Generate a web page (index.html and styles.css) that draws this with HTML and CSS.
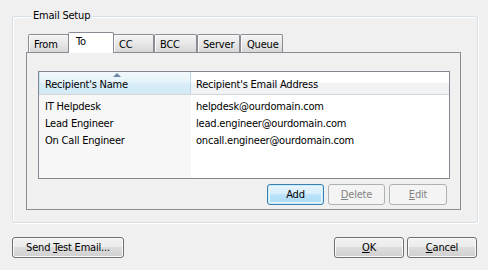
FILE: index.html
```html
<!DOCTYPE html>
<html>
<head>
<meta charset="utf-8">
<link rel="stylesheet" href="styles.css">
</head>
<body>
<div class="dialog">
  <div class="group">
    <div class="group-title">Email Setup</div>
    <div class="tabs">
      <div class="tab t-from">From</div>
      <div class="tab t-to selected">To</div>
      <div class="tab t-cc">CC</div>
      <div class="tab t-bcc">BCC</div>
      <div class="tab t-server">Server</div>
      <div class="tab t-queue">Queue</div>
    </div>
    <div class="panel">
      <div class="listview">
        <div class="lv-header">
          <div class="lv-col c1 sorted"><span class="sort-arrow"></span>Recipient's Name</div>
          <div class="lv-col c2">Recipient's Email Address</div>
          <div class="lv-col c3"></div>
        </div>
        <div class="lv-body">
          <div class="lv-sortbg"></div>
          <div class="lv-rows">
            <div class="lv-row"><span class="cell c1">IT Helpdesk</span><span class="cell c2">helpdesk@ourdomain.com</span></div>
            <div class="lv-row"><span class="cell c1">Lead Engineer</span><span class="cell c2">lead.engineer@ourdomain.com</span></div>
            <div class="lv-row"><span class="cell c1">On Call Engineer</span><span class="cell c2">oncall.engineer@ourdomain.com</span></div>
          </div>
        </div>
      </div>
      <div class="panel-buttons">
        <div class="btn default b-add">Add</div>
        <div class="btn disabled b-del"><u>D</u>elete</div>
        <div class="btn disabled b-edit"><u>E</u>dit</div>
      </div>
    </div>
  </div>
  <div class="footer">
    <div class="btn b-send">Send <u>T</u>est Email...</div>
    <div class="spacer"></div>
    <div class="btn b-ok"><u>O</u>K</div>
    <div class="btn b-cancel"><u>C</u>ancel</div>
  </div>
</div>
</body>
</html>
```
FILE: styles.css
```css
* { box-sizing: border-box; }
html, body { margin: 0; padding: 0; }
body {
  width: 488px;
  height: 270px;
  background: #f0f0f0;
  font-family: "DejaVu Sans Condensed", "DejaVu Sans", sans-serif;
  font-size: 11px;
  letter-spacing: -0.2px;
  color: #000;
  overflow: hidden;
}
.dialog {
  padding: 16px 0 0 12px;
}
.group {
  width: 466px;
  height: 207px;
  border: 1px solid #d5dfe5;
  border-radius: 3px;
  box-shadow: 1px 1px 0 #fff, inset 1px 1px 0 #fff;
  padding: 0 16px 0 13px;
}
.group-title {
  display: inline-block;
  margin: -8px 0 0 5px;
  padding: 0 2px;
  height: 14px;
  line-height: 14px;
  background: #f0f0f0;
  vertical-align: top;
}
.tabs {
  display: flex;
  align-items: flex-end;
  margin-top: 2px;
  padding-left: 2px;
  height: 21px;
  position: relative;
  z-index: 1;
}
.tab {
  height: 18px;
  margin-bottom: 1px;
  border: 1px solid #898c95;
  border-bottom: none;
  border-radius: 2px 2px 0 0;
  background: linear-gradient(#f3f3f3, #e6e6e6 55%, #d6d6d6);
  box-shadow: inset 1px 1px 0 #fbfbfb;
  padding-left: 5px;
  line-height: 19px;
  white-space: nowrap;
}
.tab.selected {
  height: 21px;
  margin-bottom: 0;
  background: #fff;
  box-shadow: none;
  line-height: 17px;
  padding-left: 7px;
}
.t-from { width: 41px; }
.t-to { width: 46px; margin-left: -1px; }
.t-cc { width: 41px; margin-left: -1px; }
.t-bcc { width: 43px; }
.t-server { width: 43px; }
.t-queue { width: 43px; padding-left: 6px; }
.panel {
  width: 435px;
  height: 158px;
  margin-top: -1px;
  border: 1px solid #898c95;
  background: #f0f0f0;
  padding: 18px 10px 0 11px;
}
.listview {
  width: 412px;
  height: 108px;
  border: 1px solid #828790;
  background: #fff;
  display: flex;
  flex-direction: column;
}
.lv-header {
  display: flex;
  height: 23px;
  border-bottom: 1px solid #d5d5d5;
  background: linear-gradient(#ffffff, #ffffff 45%, #f1f2f4 55%, #f1f2f4);
}
.lv-col {
  height: 22px;
  line-height: 26px;
  white-space: nowrap;
  position: relative;
}
.lv-col.c1 {
  width: 152px;
  padding-left: 6px;
  border-right: 1px solid #b9d8ea;
}
.lv-col.sorted {
  background: linear-gradient(#f2f9fc, #e5f3fa 45%, #d6ecf7 55%, #d3eaf6);
  border-left: 1px solid #c6e4f3;
  padding-left: 5px;
}
.lv-col.c2 {
  width: 190px;
  padding-left: 5px;
}
.lv-col.c3 { flex: 1; }
.sort-arrow {
  position: absolute;
  left: 73px;
  top: 1px;
  width: 0;
  height: 0;
  border-left: 4px solid transparent;
  border-right: 4px solid transparent;
  border-bottom: 4px solid #6f8aa8;
}
.lv-body {
  flex: 1;
  display: flex;
  position: relative;
}
.lv-sortbg {
  width: 152px;
  background: #f7f7f7;
  flex: none;
}
.lv-rows {
  position: absolute;
  left: 0;
  top: 0;
  right: 0;
  padding-top: 3px;
}
.lv-row {
  display: flex;
  height: 17px;
  line-height: 18px;
  white-space: nowrap;
}
.cell.c1 { width: 152px; padding-left: 6px; }
.cell.c2 { padding-left: 5px; }
.panel-buttons {
  display: flex;
  justify-content: flex-end;
  gap: 4px;
  margin-top: 5px;
  padding-right: 3px;
}
.btn {
  height: 21px;
  border: 1px solid #707070;
  border-radius: 3px;
  background: linear-gradient(#f2f2f2, #ebebeb 50%, #dddddd 50%, #cfcfcf);
  box-shadow: inset 0 0 0 1px #fafafa;
  text-align: center;
  line-height: 20px;
  white-space: nowrap;
}
.btn.default {
  border-color: #3c7fb1;
  background: linear-gradient(#e5f4fc, #d5eefc 50%, #bde4fb 50%, #a9daf6);
  box-shadow: inset 0 0 0 1px #c8ebfd, inset 0 0 0 2px #e9f6fd;
}
.btn.disabled {
  border-color: #adb2b5;
  background: #f4f4f4;
  box-shadow: none;
  color: #838383;
}
.b-add { width: 57px; }
.b-del { width: 57px; }
.b-edit { width: 58px; }
.footer {
  display: flex;
  gap: 3px;
  margin-top: 14px;
  width: 465px;
}
.spacer { flex: 1; }
.b-send { width: 112px; }
.b-ok { width: 70px; }
.b-cancel { width: 70px; }
```
